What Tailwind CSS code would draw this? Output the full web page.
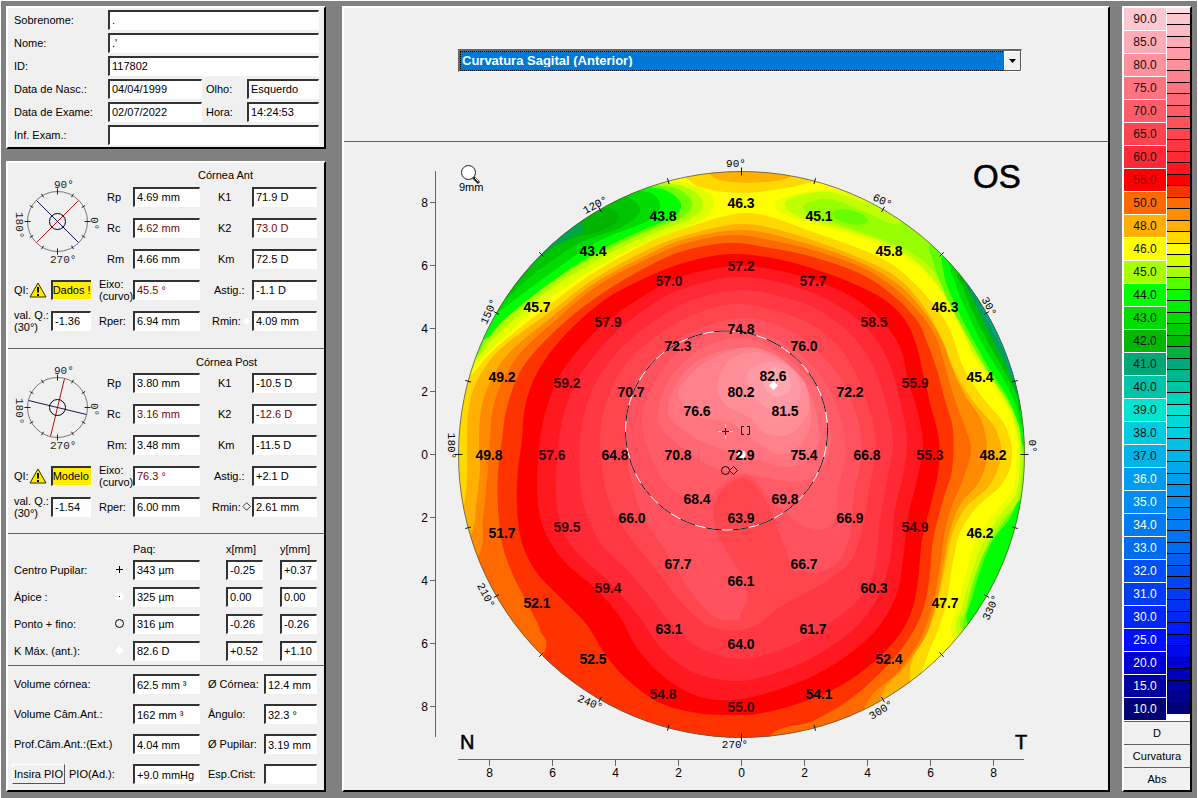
<!DOCTYPE html>
<html lang="pt">
<head>
<meta charset="utf-8">
<title>Topografia corneana</title>
<script src="https://cdn.jsdelivr.net/npm/@tailwindcss/browser@4"></script>
</head>
<body class="flex min-h-screen border border-white bg-[#808080] p-[5px] pb-[6px] font-['Liberation_Sans',Arial,sans-serif] text-[11px] leading-3 text-black [&_input]:h-5 [&_input]:w-full [&_input]:min-w-0 [&_input]:border-t-2 [&_input]:border-l-2 [&_input]:border-r [&_input]:border-b [&_input]:border-t-[#333] [&_input]:border-l-[#333] [&_input]:border-r-white [&_input]:border-b-white [&_input]:bg-white [&_input]:pl-[2px] [&_input]:outline-none">

<aside class="flex w-[320px] shrink-0 flex-col gap-3">
  <form class="grid grid-cols-[94px_94px_45px_72px] items-center border-t-2 border-l-2 border-r-2 border-b-2 border-t-white border-l-white border-r-black border-b-black bg-[#f0f0f0] pb-px pl-[6px] auto-rows-[23px]">
    <label for="sn">Sobrenome:</label><div class="col-span-3"><input id="sn" value="."></div>
    <label for="nm">Nome:</label><div class="col-span-3"><input id="nm" value=".'"></div>
    <label for="pid">ID:</label><div class="col-span-3"><input id="pid" value="117802"></div>
    <label for="dn">Data de Nasc.:</label><input id="dn" value="04/04/1999"><label for="ol" class="pl-1">Olho:</label><input id="ol" value="Esquerdo">
    <label for="de">Data de Exame:</label><input id="de" value="02/07/2022"><label for="ho" class="pl-1">Hora:</label><input id="ho" value="14:24:53">
    <label for="ie">Inf. Exam.:</label><div class="col-span-3"><input id="ie" value=""></div>
  </form>

  <form class="flex grow flex-col border-2 border-t-white border-l-white border-r-black border-b-black bg-[#f0f0f0]">
    <section class="border-b border-[#606060] pb-3">
      <h2 class="flex h-[18px] items-end pl-[190px]">Córnea Ant</h2>
      <div class="grid auto-rows-[31px] grid-cols-[77px_42px_67px_52px_65px] items-center pl-[6px]">
        <svg class="row-span-3 h-[93px] w-[92px] overflow-visible" viewBox="14 182 92 93" fill="none" font-family="Liberation Mono" font-size="11">
          <circle cx="57.500" cy="222.500" r="30" stroke="#777"/>
          <g class="ticks" stroke="#222"></g>
          <path d="M36.500 243.500L78.500 201.500" stroke="#c01010"/><path d="M36.500 201.500L78.500 243.500" stroke="#181860"/>
          <circle cx="57.500" cy="222.500" r="8" stroke="#000"/>
          <g fill="#222"><text x="54" y="189">90°</text><text x="50" y="264">270°</text><text transform="translate(16 213) rotate(90)">180°</text><text transform="translate(91 218) rotate(90)">0°</text></g>
        </svg>
        <label for="a1" class="pl-4">Rp</label><input id="a1" value="4.69 mm"><label for="a2" class="pl-[18px]">K1</label><input id="a2" value="71.9 D">
        <label for="a3" class="pl-4">Rc</label><input id="a3" class="text-[#800000]" value="4.62 mm"><label for="a4" class="pl-[18px]">K2</label><input id="a4" class="text-[#800000]" value="73.0 D">
        <label for="a5" class="pl-4">Rm</label><input id="a5" value="4.66 mm"><label for="a6" class="pl-[18px]">Km</label><input id="a6" value="72.5 D">
        <div class="flex items-center"><label for="a7" class="w-[15px]">QI:</label><svg class="mr-1 h-4 w-[18px] shrink-0" viewBox="0 0 18 16"><path d="M9 1L17 15H1Z" fill="#ffe800" stroke="#332d00" stroke-linejoin="round"/><path d="M9 5V10.500M9 12V14" stroke="#000" stroke-width="2"/></svg><input id="a7" class="border-r-0! bg-[#ffee00]! pl-0!" value="Dados !"></div>
        <label for="a8" class="pl-2 whitespace-nowrap">Eixo:<br>(curvo)</label><input id="a8" class="text-[#800000]" value="45.5 °"><label for="a9" class="pl-[14px]">Astig.:</label><input id="a9" value="-1.1 D">
        <div class="flex items-center"><label for="a10" class="w-[37px] shrink-0 whitespace-nowrap">val. Q.:<br>(30°)</label><input id="a10" value="-1.36"></div>
        <label for="a11" class="pl-2">Rper:</label><input id="a11" value="6.94 mm"><label for="a12" class="flex items-center pl-3">Rmin:<svg class="h-2 w-3" viewBox="0 0 12 8"><path d="M6 0L10 4L6 8L2 4Z" fill="#fff"/></svg></label><input id="a12" value="4.09 mm">
      </div>
    </section>

    <section class="border-b border-[#606060] pb-[11px]">
      <h2 class="flex h-[18px] items-center pt-2 pl-[188px]">Córnea Post</h2>
      <div class="grid auto-rows-[31px] grid-cols-[77px_42px_67px_52px_65px] items-center pl-[6px]">
        <svg class="row-span-3 h-[93px] w-[92px] overflow-visible" viewBox="14 182 92 93" fill="none" font-family="Liberation Mono" font-size="11">
          <circle cx="57.500" cy="222.500" r="30" stroke="#777"/>
          <g class="ticks" stroke="#222"></g>
          <path d="M50.500 251.500L64.500 193.500" stroke="#c01010"/><path d="M28.500 215.500L86.500 229.500" stroke="#181860"/>
          <circle cx="57.500" cy="222.500" r="8" stroke="#000"/>
          <g fill="#222"><text x="54" y="189">90°</text><text x="50" y="264">270°</text><text transform="translate(16 213) rotate(90)">180°</text><text transform="translate(91 218) rotate(90)">0°</text></g>
        </svg>
        <label for="b1" class="pl-4">Rp</label><input id="b1" value="3.80 mm"><label for="b2" class="pl-[18px]">K1</label><input id="b2" value="-10.5 D">
        <label for="b3" class="pl-4">Rc</label><input id="b3" class="text-[#800000]" value="3.16 mm"><label for="b4" class="pl-[18px]">K2</label><input id="b4" class="text-[#800000]" value="-12.6 D">
        <label for="b5" class="pl-4">Rm:</label><input id="b5" value="3.48 mm"><label for="b6" class="pl-[18px]">Km</label><input id="b6" value="-11.5 D">
        <div class="flex items-center"><label for="b7" class="w-[15px]">QI:</label><svg class="mr-1 h-4 w-[18px] shrink-0" viewBox="0 0 18 16"><path d="M9 1L17 15H1Z" fill="#ffe800" stroke="#332d00" stroke-linejoin="round"/><path d="M9 5V10.500M9 12V14" stroke="#000" stroke-width="2"/></svg><input id="b7" class="border-r-0! bg-[#ffee00]! pl-0!" value="Modelo"></div>
        <label for="b8" class="pl-2 whitespace-nowrap">Eixo:<br>(curvo)</label><input id="b8" class="text-[#800000]" value="76.3 °"><label for="b9" class="pl-[14px]">Astig.:</label><input id="b9" value="+2.1 D">
        <div class="flex items-center"><label for="b10" class="w-[37px] shrink-0 whitespace-nowrap">val. Q.:<br>(30°)</label><input id="b10" value="-1.54"></div>
        <label for="b11" class="pl-2">Rper:</label><input id="b11" value="6.00 mm"><label for="b12" class="flex items-center pl-3">Rmin:<svg class="h-[9px] w-3" viewBox="0 0 12 9"><path d="M6 .5L10 4.500L6 8.500L2 4.500Z" fill="none" stroke="#333"/></svg></label><input id="b12" value="2.61 mm">
      </div>
    </section>

    <section class="grid grid-cols-[98px_21px_67px_26px_37px_17px_37px] grid-rows-[22px] auto-rows-[27px] items-center border-b border-[#606060] pb-px pl-[6px]">
      <span class="col-start-3 pt-2">Paq:</span><span class="col-start-5 pt-2">x[mm]</span><span class="col-start-7 pt-2">y[mm]</span>
      <label for="c1">Centro Pupilar:</label><svg class="h-4 w-4" viewBox="0 0 16 16"><path d="M4 7.500H11M7.500 4V11" stroke="#000"/></svg><input id="c1" value="343 µm"><span></span><input aria-label="Centro x" value="-0.25"><span></span><input aria-label="Centro y" value="+0.37">
      <label for="c2">Ápice :</label><svg class="h-4 w-4" viewBox="0 0 16 16"><circle cx="7.500" cy="7.500" r="4" fill="#fff"/><path d="M7 7.500H8" stroke="#000"/></svg><input id="c2" value="325 µm"><span></span><input aria-label="Ápice x" value="0.00"><span></span><input aria-label="Ápice y" value="0.00">
      <label for="c3">Ponto + fino:</label><svg class="h-4 w-4" viewBox="0 0 16 16"><circle cx="7.500" cy="7.500" r="4" fill="none" stroke="#000"/></svg><input id="c3" value="316 µm"><span></span><input aria-label="Ponto fino x" value="-0.26"><span></span><input aria-label="Ponto fino y" value="-0.26">
      <label for="c4">K Máx. (ant.):</label><svg class="h-4 w-4" viewBox="0 0 16 16"><path d="M7.500 3L12 7.500L7.500 12L3 7.500Z" fill="#fff"/></svg><input id="c4" value="82.6 D"><span></span><input aria-label="K Máx x" value="+0.52"><span></span><input aria-label="K Máx y" value="+1.10">
    </section>

    <section class="grid auto-rows-[30px] grid-cols-[119px_67px_64px_53px] items-center pt-[3px] pl-[6px] whitespace-nowrap">
      <label for="d1">Volume córnea:</label><input id="d1" value="62.5 mm ³"><label for="d2" class="pl-2">Ø Córnea:</label><input id="d2" value="12.4 mm">
      <label for="d3">Volume Câm.Ant.:</label><input id="d3" value="162 mm ³"><label for="d4" class="pl-2">Ângulo:</label><input id="d4" value="32.3 °">
      <label for="d5">Prof.Câm.Ant.:(Ext.)</label><input id="d5" value="4.04 mm"><label for="d6" class="pl-2">Ø Pupilar:</label><input id="d6" value="3.19 mm">
      <div class="-ml-[2px] flex items-center gap-1"><button type="button" class="h-5 w-[53px] border border-t-white border-l-white border-r-[#555] border-b-[#555] bg-[#f0f0f0]">Insira PIO</button><label for="d7">PIO(Ad.):</label></div><input id="d7" value="+9.0 mmHg"><label for="d8" class="pl-2">Esp.Crist:</label><input id="d8" value="">
    </section>
  </form>
</aside>

<main class="mr-3 ml-4 flex min-w-0 grow flex-col border-2 border-t-white border-l-white border-r-black border-b-black bg-[#f0f0f0]">
  <header class="flex h-[134px] shrink-0 items-start border-b border-[#606060] pt-[41px] pr-[86px] pl-[114px]">
    <div class="relative flex h-[23px] grow border-t-2 border-l-2 border-t-[#666] border-l-[#666] border-r border-b border-r-white border-b-white bg-white">
      <select aria-label="Mapa" class="w-full appearance-none border-r-[17px] border-[#f0f0f0] bg-[#0078d7] pl-[2px] text-[13px] font-bold text-white outline-1 -outline-offset-1 outline-dotted outline-black"><option>Curvatura Sagital (Anterior)</option></select>
      <svg class="pointer-events-none absolute top-0 right-0 h-5 w-[17px]" viewBox="0 0 17 20"><path d="M0 0H17V20H0Z" fill="#f0f0f0"/><path d="M.5 19V.5H16" fill="none" stroke="#fff"/><path d="M0 19.500H16.500V0" fill="none" stroke="#555"/><path d="M5 8H12L8.500 12Z"/></svg>
    </div>
  </header>
  <svg class="min-h-0 w-full grow" viewBox="344 142 764 648" font-family="Liberation Sans, Arial, sans-serif">
    <defs><clipPath id="disc"><circle cx="741.500" cy="454.500" r="283"/></clipPath></defs>
    <g id="bands" clip-path="url(#disc)"></g>
    <circle cx="741.500" cy="454.500" r="283" fill="none" stroke="#555" stroke-width=".8"/>
    <g id="rim" stroke="#111"></g>
    <ellipse cx="726.500" cy="430.500" rx="101" ry="99.500" fill="none" stroke="#fff"/>
    <ellipse cx="726.500" cy="430.500" rx="101" ry="99.500" fill="none" stroke="#111" stroke-dasharray="16 11"/>
    <g fill="none" stroke="#111">
      <path d="M718 431.500H733M725.500 424V439" stroke="#ffc8cc"/><path d="M722 431.500H729M725.500 428V435"/>
      <path d="M744 426.500H741.500V434.500H744M747 426.500H749.500V434.500H747"/>
      <circle cx="725.500" cy="470.500" r="4"/><path d="M733.500 466.500L737.500 470.500L733.500 474.500L729.500 470.500Z"/>
    </g>
    <path d="M773.500 381L778 385.500L773.500 390L769 385.500Z" fill="#fff"/><circle cx="741.500" cy="454.500" r="4" fill="#fff"/>
    <g id="vals" font-size="14" font-weight="bold" text-anchor="middle"></g>
    <g id="degs" font-family="Liberation Mono, monospace" font-size="11" text-anchor="middle"></g>
    <path d="M435.500 171V737M458 759.500H1024" stroke="#666"/>
    <g id="axis" font-size="12"></g>
    <circle cx="468.500" cy="172.500" r="7" fill="#fff" stroke="#222"/><path d="M473.500 177.500L479 183" stroke="#222" stroke-width="3"/><path d="M475 178L478.500 181.500" stroke="#fff"/>
    <text x="459" y="191" font-size="11">9mm</text>
    <text x="973" y="188" font-size="33" stroke="#000" stroke-width=".6">OS</text>
    <text x="460" y="749" font-size="20" stroke="#000" stroke-width=".5">N</text>
    <text x="1015" y="749" font-size="20" stroke="#000" stroke-width=".5">T</text>
  </svg>
</main>

<aside class="flex w-[70px] shrink-0 flex-col border-2 border-t-white border-l-white border-r-black border-b-black bg-[#f0f0f0]">
  <div class="flex bg-white">
    <div id="scale" class="w-[43px] border-r border-white text-center text-xs"></div>
    <div id="steps" class="grow"></div>
  </div>
  <div class="flex h-[23px] items-center justify-center border-t border-[#606060]">D</div>
  <div class="flex h-[23px] items-center justify-center border-t border-[#606060]">Curvatura</div>
  <div class="flex h-[23px] items-center justify-center border-t border-[#606060]">Abs</div>
</aside>

<script>
// Closed Catmull-Rom curve through a flat list of x,y pairs
function curve(s) {
  const n = s.trim().split(/[ ,]+/).map(Number), p = [];
  for (let i = 0; i < n.length; i += 2) p.push([n[i], n[i + 1]]);
  const L = p.length, at = i => p[(i + L) % L];
  let d = 'M' + p[0];
  for (let i = 0; i < L; i++) {
    const a = at(i - 1), b = at(i), c = at(i + 1), e = at(i + 2);
    d += 'C' + [b[0] + (c[0] - a[0]) / 6, b[1] + (c[1] - a[1]) / 6, c[0] - (e[0] - b[0]) / 6, c[1] - (e[1] - b[1]) / 6, c[0], c[1]].map(v => v.toFixed(1));
  }
  return d + 'Z';
}
// Contour bands, lowest first: colour, outline
const bands = [
 ['#ffd800','672,150 690,181 712,190 741,193 765,191 800,185 825,175 820,150'],
 ['#ffb000','700,150 712,176 735,182 765,182 790,177 800,160 790,150'],
 ['#e0ff00','600,140 655,176 690,184 710,194 714,206 704,219 677,231 630,250 583,276 540,305 500,341 478,362 460,385 420,330 500,180'],
 ['#b0ff00','600,140 650,178 683,186 699,196 702,208 690,219 667,228 622,247 577,272 532,303 493,339 472,362 440,370 420,300 500,180'],
 ['#70ff00','600,140 645,180 675,188 690,198 691,209 679,219 655,228 610,248 565,273 520,306 490,334 470,355 420,300 500,180'],
 ['#00ff00','590,150 640,183 665,190 679,200 680,210 670,219 643,230 597,252 547,285 507,317 480,341 440,330 500,180'],
 ['#00dc00','590,150 630,186 653,194 660,208 645,222 595,243 540,281 500,311 470,335 440,300 500,180'],
 ['#00c400','590,170 610,190 630,198 640,211 622,227 580,243 535,273 500,303 470,315 500,200'],
 ['#00b400','575,180 597,204 613,210 618,220 600,231 560,243 525,268 500,292 480,280 520,200'],
 ['#00a44c','540,200 583,226 570,238 555,246 535,262 515,285 495,290 500,230'],
 ['#e8ff00','775,204 795,194 835,190 870,197 900,185 1050,300 1070,500 1000,690 953,640 960,600 967,570 977,537 997,510 1013,490 1016,460 1017,440 1011,417 997,392 977,363 963,333 943,294 917,266 880,245 840,231 790,217'],
 ['#c0ff00','785,203 800,195 830,192 863,202 895,207 930,210 1060,300 1070,500 1000,690 958,635 963,605 971,575 982,545 1000,515 1016,493 1020,458 1017,432 1009,408 993,381 973,352 956,318 937,284 913,259 880,241 840,228 797,216'],
 ['#98ff00','803,207 815,200 835,200 863,211 895,224 930,220 1060,300 1070,500 1000,690 962,632 966,608 973,581 985,550 1001,521 1017,500 1023,455 1019,430 1010,406 993,378 973,346 955,311 934,272 910,252 878,238 840,225 812,216'],
 ['#60ff00','935,245 935,267 948,300 970,341 990,375 1010,405 1020,430 1026,455 1060,420 1010,290'],
 ['#60ff00','1030,485 1018,504 1003,523 986,549 975,577 968,605 965,632 1000,660 1060,550'],
 ['#00ff00','948,255 944,274 953,300 970,334 990,370 1008,398 1019,425 1026,445 1060,400 1010,290'],
 ['#00ff00','1025,500 1009,520 993,540 982,565 973,595 968,625 1000,660 1060,550'],
 ['#00dc00','953,262 956,285 966,310 983,345 1001,375 1014,400 1024,425 1050,390 1010,290'],
 ['#00bc00','960,272 964,290 973,312 989,344 1005,372 1017,395 1022,410 1050,380 1010,280'],
 ['#00a05c','968,280 973,299 984,322 996,346 1008,369 1020,395 1040,360 1010,280'],
 ['#00a48c','977,288 982,308 993,330 1003,350 1015,380 1040,350 1010,280'],
 ['#ffd800','440,420 458,390 470,377 497,347 547,307 590,275 643,245 683,229 730,215 763,215 813,232 863,250 897,268 930,300 950,330 963,367 982,397 1005,425 1012,455 1003,483 977,507 960,533 952,567 947,600 938,630 925,662 915,700 900,800 400,800 400,455'],
 ['#ffb000','467,440 468,415 473,390 486,366 505,345 550,312 593,280 645,251 687,235 741,224 790,233 850,254 895,276 922,304 940,335 954,370 972,400 995,428 1001,455 990,485 966,507 952,535 945,567 938,600 928,632 910,670 890,800 400,800 420,600 455,530 464,505 467,475'],
 ['#ff8c00','479,440 481,410 490,382 510,352 553,316 595,283 645,256 685,239 741,230 790,239 850,258 895,282 922,309 942,340 953,370 965,395 982,422 987,455 979,482 960,505 949,535 943,567 936,603 925,637 903,669 880,700 860,800 400,800 440,600 471,535 476,505 480,470'],
 ['#ff6a00','490,440 495,400 517,357 557,319 597,286 643,261 683,244 730,235 770,240 813,250 863,268 897,290 923,317 937,340 947,373 955,400 965,427 971,450 963,480 953,503 945,530 940,567 932,607 920,640 897,673 865,706 830,800 400,800 440,600 478,557 483,520 487,480'],
 ['#ff3300','502,440 507,407 523,367 557,329 597,297 643,269 683,251 730,243 770,248 813,257 863,275 897,299 918,322 927,342 937,370 945,400 953,430 952,470 943,500 933,540 930,573 924,607 910,637 887,666 853,697 813,721 770,736 740,800 480,760 542,658 540,630 527,603 512,573 502,543 498,507 498,473'],
 ['#ff0000','522,440 525,407 537,373 563,337 603,301 643,279 683,263 730,254 777,259 823,272 863,288 890,304 907,323 917,347 923,373 931,407 939,440 938,473 930,507 922,540 918,580 912,610 897,638 870,665 840,686 803,702 763,713 735,715 697,713 660,703 630,682 607,657 587,625 563,600 537,573 522,543 517,507 518,470'],
 ['#ff1820','540,440 547,407 563,370 597,330 637,300 683,276 741,266 797,275 847,294 880,319 900,347 908,380 918,413 923,445 917,480 908,517 903,560 897,593 880,625 853,651 817,674 777,690 735,700 697,696 663,676 637,648 620,617 597,590 563,560 543,527 537,490'],
 ['#ff2a35','559,440 565,410 580,375 610,338 645,309 685,288 741,277 800,288 845,310 873,335 890,365 900,400 907,440 903,475 895,510 890,560 878,597 855,628 820,653 787,669 741,681 695,673 662,649 640,618 610,583 573,548 559,517 556,480'],
 ['#ff3843','580,440 590,395 615,355 650,324 690,301 741,290 790,299 825,314 855,339 873,366 885,400 893,440 888,475 880,520 874,570 858,600 825,626 790,646 745,659 707,651 680,634 655,603 630,573 602,545 585,510 580,480'],
 ['#ff464f','600,440 607,400 625,365 655,337 695,314 741,304 800,319 835,343 853,368 868,405 876,445 869,490 862,530 850,562 820,585 780,607 750,628 711,627 682,603 655,568 625,530 607,495'],
 ['#ff525e','625,440 628,405 640,375 665,348 700,328 741,318 780,326 812,346 838,375 855,410 862,450 854,495 850,535 838,562 815,573 795,572 765,600 743,618 715,617 690,590 665,550 642,515 630,475'],
 ['#ff464f','741,478 722,490 713,510 718,535 732,560 744,580 747,600 740,616 750,624 768,608 799,590 790,562 780,535 768,505 755,485'],
 ['#ff5c68','645,440 642,415 653,385 675,355 705,336 741,328 790,347 820,375 838,410 846,450 838,490 835,518 820,530 798,522 772,500 755,480 741,475 722,485 702,501 675,492 657,470'],
 ['#ff6873','660,425 662,395 678,368 705,347 741,338 775,350 805,374 823,403 831,440 820,470 797,482 765,477 741,473 715,468 685,450'],
 ['#ff747f','668,412 680,378 705,357 741,348 785,362 809,392 819,430 813,455 788,467 755,459 720,449 690,435'],
 ['#ff818b','678,393 700,366 730,351 757,348 786,362 806,390 811,420 802,443 780,455 757,442 730,423 695,415'],
 ['#ff8e98','717,385 730,360 756,352 786,364 806,385 808,413 790,434 765,433 750,418 726,405'],
 ['#ff9aa4','747,380 752,368 768,362 790,367 800,385 796,405 775,411 757,400'],
 ['#ffa8b0','764,379 774,367 788,374 790,390 777,397 766,390']
];
document.getElementById('bands').innerHTML = '<rect x="440" y="160" width="600" height="600" fill="#ffff00"/>' +
  bands.map(b => `<path fill="${b[0]}" d="${curve(b[1])}"/>`).join('') +
  '<ellipse cx="850" cy="217" rx="18" ry="7" transform="rotate(12 850 217)" fill="#68ff00"/>';

// Curvature readings: text, centre x, centre y
const vals = `46.3 741 203,43.8 663 216,45.1 819 216,43.4 593 251,45.8 889 251,57.0 669 281,57.2 741 266,57.7 813 281,45.7 537 307,46.3 945 307,57.9 608 322,58.5 874 322,74.8 741 329,72.3 678 346,76.0 804 346,49.2 502 377,59.2 567 383,70.7 631 392,80.2 741 392,82.6 773 376,72.2 850 392,55.9 915 383,45.4 980 377,76.6 697 411,81.5 785 411,49.8 489 455,57.6 552 455,64.8 615 455,70.8 678 455,72.9 741 455,75.4 804 455,66.8 867 455,55.3 930 455,48.2 993 455,68.4 697 499,69.8 785 499,66.0 632 518,63.9 741 518,66.9 850 518,51.7 502 533,59.5 567 527,54.9 915 527,46.2 980 533,67.7 678 564,66.7 804 564,66.1 741 581,59.4 608 588,60.3 874 588,52.1 537 603,47.7 945 603,63.1 669 629,61.7 813 629,64.0 741 644,52.5 593 659,52.4 889 659,54.8 663 694,54.1 819 694,55.0 741 707`;
document.getElementById('vals').innerHTML = vals.split(',').map(t => {
  const [v, x, y] = t.split(' ');
  return `<text x="${x}" y="${+y + 5}" fill="${v > 54.5 && v < 60 ? '#380404' : '#000'}">${v}</text>`;
}).join('');
const degs = [['90°',736,167,0],['60°',881,204,25],['120°',597,208,-28],['150°',492,313,-65],['30°',986,308,62],['0°',1029,446,90],['180°',448,446,90],['210°',483,597,62],['240°',589,706,22],['270°',735,748,0],['300°',883,713,-32],['330°',994,609,-65]];
document.getElementById('degs').innerHTML = degs.map(d => `<text transform="translate(${d[1]} ${d[2]}) rotate(${d[3]})">${d[0]}</text>`).join('');

function ticks(cx, cy, r, half, step) {
  let s = '';
  for (let a = 0; a < 360; a += step) {
    const c = Math.cos(a * Math.PI / 180), n = Math.sin(a * Math.PI / 180), h = a % 90 ? half : half + 1;
    s += `<path d="M${cx + c * (r - h)} ${cy + n * (r - h)}L${cx + c * (r + h)} ${cy + n * (r + h)}"/>`;
  }
  return s;
}
document.getElementById('rim').innerHTML = ticks(741.5, 454.5, 283, 3, 15);
document.querySelectorAll('.ticks').forEach(g => g.innerHTML = ticks(57.5, 222.5, 30, 2, 30));

let ax = '';
for (let i = -4; i <= 4; i++) {
  const v = Math.abs(i * 2), y = 454.5 + i * 63, x = 741.5 + i * 63;
  ax += `<path d="M430 ${y}H435M${x} 760V766" stroke="#666"/><text x="428" y="${y + 4}" text-anchor="end">${v}</text><text x="${x}" y="777" text-anchor="middle">${v}</text>`;
}
document.getElementById('axis').innerHTML = ax;

// Colour scale: dioptre value and colour
const scale = [[90,'#ffc8d0'],[85,'#ffacb8'],[80,'#ff909c'],[75,'#ff7480'],[70,'#ff5c68'],[65,'#ff4450'],[60,'#ff2a35'],[55,'#ff0000'],[50,'#ff6a00'],[48,'#ffb000'],[46,'#ffff00'],[45,'#a8ff00'],[44,'#00ff00'],[43,'#00dc00'],[42,'#00b800'],[41,'#00a878'],[40,'#00c4a8'],[39,'#00e4d0'],[38,'#00cce0'],[37,'#00b4e8'],[36,'#009cf0'],[35,'#008cf0'],[34,'#007cf0'],[33,'#006cf0'],[32,'#0050f0'],[31,'#003cf0'],[30,'#0028f8'],[25,'#0010ff'],[20,'#0000d0'],[15,'#0000a0'],[10,'#000078']];
document.getElementById('scale').innerHTML = scale.map(([v, c]) =>
  `<div class="flex h-[23px] items-center justify-center border-b border-white" style="background:${c};color:${v < 37 ? '#fff' : v === 55 ? '#800000' : '#111'}">${v.toFixed(1)}</div>`).join('');
let st = '<div class="h-[5px] bg-[#ffe0e6]"></div>';
scale.forEach(([v, c], i) => {
  st += `<div class="h-[11px] border-t-1 border-black" style="background:${c}"></div>`;
  if (i < 30) st += `<div class="h-[12px] border-t-1 border-black" style="background:${v === 55 ? '#ff3300' : `color-mix(in srgb, ${c}, ${scale[i + 1][1]})`}"></div>`;
});
document.getElementById('steps').innerHTML = st;
</script>
</body>
</html>
